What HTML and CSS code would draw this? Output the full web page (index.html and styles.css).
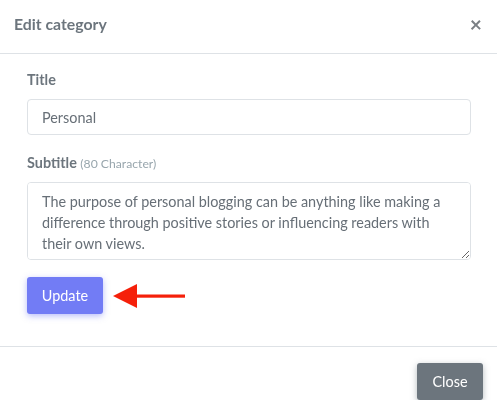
FILE: index.html
```html
<!DOCTYPE html>
<html>
<head>
<meta charset="utf-8">
<link rel="stylesheet" href="styles.css">
</head>
<body>
<div class="modal">
  <div class="modal-header">
    <h4 class="modal-title">Edit category</h4>
    <span class="close-x">&times;</span>
  </div>
  <div class="modal-body">
    <div class="form-group">
      <label class="label">Title</label>
      <input class="control" type="text" value="Personal">
    </div>
    <div class="form-group">
      <label class="label">Subtitle <small class="hint">(80 Character)</small></label>
      <textarea class="control area">The purpose of personal blogging can be anything like making a difference through positive stories or influencing readers with their own views.</textarea>
    </div>
    <div class="action-row">
      <button class="btn btn-primary">Update</button>
      <svg class="arrow" width="74" height="26" viewBox="0 0 74 26">
        <polygon points="0,13 24,1 24,25" fill="#f5200a"/>
        <rect x="22" y="11.5" width="50" height="3.2" fill="#f5200a"/>
      </svg>
    </div>
  </div>
  <div class="modal-footer">
    <button class="btn btn-secondary">Close</button>
  </div>
</div>
</body>
</html>
```
FILE: styles.css
```css
html, body {
  margin: 0;
  padding: 0;
  background: #fff;
}
body {
  font-family: "Lato", "Noto Sans", sans-serif;
  font-size: 14.4px;
  color: #676f77;
}
.modal {
  width: 497px;
}
.modal-header {
  height: 47px;
  display: flex;
  align-items: center;
  justify-content: space-between;
  padding: 0 15px 6px 14px;
  border-bottom: 1px solid #dee2e6;
  box-sizing: content-box;
}
.modal-title {
  margin: 0;
  font-size: 15.8px;
  font-weight: 700;
  color: #6c757d;
}
.close-x {
  font-size: 21px;
  font-weight: 700;
  color: #7a7f84;
  line-height: 1;
}
.modal-body {
  padding: 15px 26px 32px 27px;
}
.form-group {
  margin-bottom: 17px;
}
.label {
  display: block;
  font-weight: 700;
  line-height: 21px;
  margin-bottom: 9px;
  color: #6c757d;
}
.form-group + .form-group .label {
  margin-bottom: 8px;
}
.hint {
  font-size: 12.2px;
  font-weight: 400;
  color: #98a6ad;
}
.control {
  display: block;
  box-sizing: border-box;
  width: 444px;
  height: 36px;
  margin: 0;
  padding: 0 14px;
  border: 1px solid #dee2e6;
  border-radius: 4px;
  font-family: inherit;
  font-size: 14.4px;
  color: #676f77;
  background: #fff;
  outline: none;
}
.area {
  height: 78px;
  padding: 8px 14px;
  line-height: 21px;
  resize: vertical;
}
.action-row {
  display: flex;
  align-items: center;
  gap: 10px;
}
.btn {
  font-family: inherit;
  font-size: 14.4px;
  border: none;
  border-radius: 3px;
  color: #fff;
  cursor: pointer;
}
.btn-primary {
  width: 76px;
  height: 37px;
  background: #727cf5;
  box-shadow: 0 2px 6px 0 rgba(114, 124, 245, 0.5);
}
.modal-footer {
  border-top: 1px solid #dee2e6;
  display: flex;
  justify-content: flex-end;
  padding: 16px 14px 0 0;
}
.btn-secondary {
  width: 66px;
  height: 37px;
  background: #6c757d;
  box-shadow: 0 2px 6px 0 rgba(108, 117, 125, 0.5);
}
```
